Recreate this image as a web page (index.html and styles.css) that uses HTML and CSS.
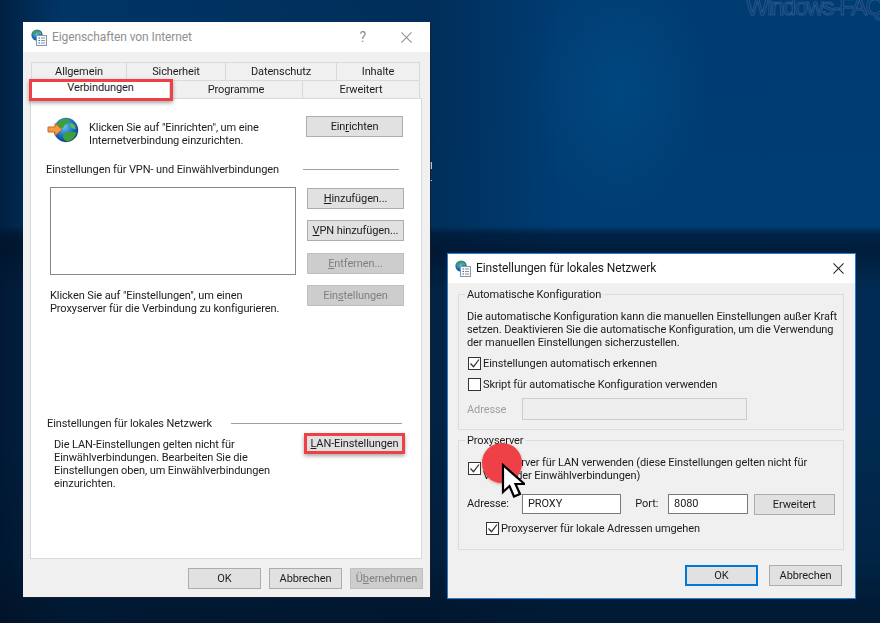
FILE: index.html
```html
<!DOCTYPE html>
<html lang="de">
<head>
<meta charset="utf-8">
<title>Eigenschaften von Internet</title>
<link rel="stylesheet" href="styles.css">
</head>
<body>
<svg class="defs" width="0" height="0" aria-hidden="true">
  <defs>
    <radialGradient id="sea" cx="0.42" cy="0.35" r="0.7">
      <stop offset="0" stop-color="#6cc4f5"/><stop offset="0.55" stop-color="#1b74c4"/><stop offset="1" stop-color="#0b2f7a"/>
    </radialGradient>
    <symbol id="globe" viewBox="0 0 32 32">
      <circle cx="16" cy="16" r="15" fill="url(#sea)"/>
      <path d="M9 4c4-2 9-2 12 0l-2 4-4 1-2 4-5 1-4-2c0-3 3-6 5-8zM14 20l8-2 7 1c-1 5-6 11-12 11-3-1-4-4-5-6z" fill="#3fa03a"/>
      <path d="M22 7l5 3 1 5-4-1-3-3z" fill="#67b845"/>
    </symbol>
    <symbol id="appicon" viewBox="0 0 16 17">
      <use href="#globe" x="0" y="0" width="12" height="12"/>
      <rect x="5.5" y="6.5" width="10" height="10" fill="#f7f9fb" stroke="#8a96a3"/>
      <path d="M7.5 9h1.5M7.5 11.500h1.500M7.500 14h1.500" stroke="#1f6fb5"/>
      <path d="M10 9h4M10 11.500h4M10 14h4" stroke="#8a96a3"/>
    </symbol>
    <symbol id="tick" viewBox="0 0 11 11">
      <path d="M1.500 5.500l3 3.200 5.500-7.200" fill="none" stroke="#333" stroke-width="1.200"/>
    </symbol>
  </defs>
</svg>
<main class="desktop">
  <div class="watermark">Windows-FAQ</div>
  <div class="stray"></div>

  <section class="win win-main">
    <header class="titlebar titlebar-inactive">
      <svg class="appicon"><use href="#appicon"/></svg>
      <span class="title">Eigenschaften von Internet</span>
      <span class="help">?</span>
      <svg class="close close-inactive" viewBox="0 0 12 12"><path d="M0.500 0.500l11 11M11.500 0.500l-11 11"/></svg>
    </header>
    <div class="win-body">
      <div class="tabrow tabrow-top">
        <div class="tab">Allgemein</div>
        <div class="tab">Sicherheit</div>
        <div class="tab">Datenschutz</div>
        <div class="tab">Inhalte</div>
      </div>
      <div class="tabrow tabrow-bottom">
        <div class="tab tab-selected">Verbindungen</div>
        <div class="tab">Programme</div>
        <div class="tab">Erweitert</div>
      </div>
      <div class="panel">
        <div class="intro">
          <svg class="bigicon" viewBox="0 0 32 26">
            <use href="#globe" x="6" y="0" width="26" height="26"/>
            <path d="M1 10h7V6.500l7 6-7 6V15H1z" fill="#f59a45" stroke="#c96a1e"/>
          </svg>
          <p class="text intro-text">Klicken Sie auf "Einrichten", um eine<br>Internetverbindung einzurichten.</p>
          <button class="btn btn-setup">Ein<u>r</u>ichten</button>
        </div>
        <div class="heading heading-vpn"><span>Einstellungen für VPN- und Einwählverbindungen</span><i class="rule rule-vpn"></i></div>
        <div class="vpn">
          <div class="vpn-left">
            <div class="listbox"></div>
            <p class="text vpn-text">Klicken Sie auf "Einstellungen", um einen<br>Proxyserver für die Verbindung zu konfigurieren.</p>
          </div>
          <div class="vpn-buttons">
            <button class="btn"><u>H</u>inzufügen...</button>
            <button class="btn"><u>V</u>PN hinzufügen...</button>
            <button class="btn btn-off"><u>E</u>ntfernen...</button>
            <button class="btn btn-off">Ein<u>s</u>tellungen</button>
          </div>
        </div>
        <div class="heading heading-lan"><span>Einstellungen für lokales Netzwerk</span><i class="rule rule-lan"></i></div>
        <div class="lan">
          <p class="text lan-text">Die LAN-Einstellungen gelten nicht für<br>Einwählverbindungen. Bearbeiten Sie die<br>Einstellungen oben, um Einwählverbindungen<br>einzurichten.</p>
          <button class="btn btn-lan"><u>L</u>AN-Einstellungen</button>
        </div>
      </div>
      <footer class="footer footer-main">
        <button class="btn btn-foot">OK</button>
        <button class="btn btn-foot">Abbrechen</button>
        <button class="btn btn-foot btn-off">Ü<u>b</u>ernehmen</button>
      </footer>
    </div>
  </section>

  <section class="win win-lan">
    <header class="titlebar titlebar-lan">
      <svg class="appicon"><use href="#appicon"/></svg>
      <span class="title title-active">Einstellungen für lokales Netzwerk</span>
      <svg class="close" viewBox="0 0 12 12"><path d="M0.500 0.500l11 11M11.500 0.500l-11 11"/></svg>
    </header>
    <div class="lan-body">
      <fieldset class="group group-auto">
        <legend>Automatische Konfiguration</legend>
        <p class="text">Die automatische Konfiguration kann die manuellen Einstellungen außer Kraft<br>setzen. Deaktivieren Sie die automatische Konfiguration, um die Verwendung<br>der manuellen Einstellungen sicherzustellen.</p>
        <label class="check check-first"><span class="box"><svg><use href="#tick"/></svg></span>Einstellungen automatisch erkennen</label>
        <label class="check check-second"><span class="box"></span>Skript für automatische Konfiguration verwenden</label>
        <div class="field field-off">
          <span class="field-label">Adresse</span>
          <span class="input input-off"></span>
        </div>
      </fieldset>
      <fieldset class="group group-proxy">
        <legend>Proxyserver</legend>
        <label class="check check-proxy"><span class="box"><svg><use href="#tick"/></svg></span><span>Proxyserver für LAN verwenden (diese Einstellungen gelten nicht für<br>VPN- oder Einwählverbindungen)</span></label>
        <div class="field field-proxy">
          <span class="field-label">Adresse:</span>
          <span class="input input-addr">PROXY</span>
          <span class="port-label">Port:</span>
          <span class="input input-port">8080</span>
          <button class="btn btn-adv">Erweitert</button>
        </div>
        <label class="check check-bypass"><span class="box"><svg><use href="#tick"/></svg></span>Proxyserver für lokale Adressen umgehen</label>
      </fieldset>
      <footer class="footer footer-lan">
        <button class="btn btn-foot btn-default">OK</button>
        <button class="btn btn-foot">Abbrechen</button>
      </footer>
    </div>
  </section>

  <div class="dot"></div>
  <svg class="cursor" viewBox="0 0 24 36"><path d="M2 2v27l6.500-6 4.500 10.500 6-2.500-4.500-10h9z" fill="#fff" stroke="#000" stroke-width="2.200" stroke-linejoin="miter"/></svg>
</main>
</body>
</html>
```
FILE: styles.css
```css
* { box-sizing: border-box; }
html, body { margin: 0; padding: 0; }
body { font: 11px/13px Roboto, "Liberation Sans", sans-serif; letter-spacing: -0.1px; color: #1c1c1c; }
.defs { position: absolute; }
p { margin: 0; white-space: nowrap; }
u { text-underline-offset: 1px; }

.desktop {
  position: relative;
  width: 880px;
  height: 623px;
  overflow: hidden;
  background:
    linear-gradient(90deg, rgba(2, 14, 34, .6) 0, rgba(2, 14, 34, .15) 60px, rgba(2, 14, 34, .3) 430px, rgba(2, 14, 34, 0) 560px),
    radial-gradient(ellipse 90px 130px at 620px 90px, rgba(0, 82, 140, .5), rgba(0, 82, 140, 0)),
    linear-gradient(180deg, #003c72 0, #003d73 226px, #002348 234px, #001d3c 250px, #012b52 290px, #012b52 420px, #012445 560px, #011c38 600px, #011a34 623px);
}

.watermark {
  position: absolute;
  left: 746px;
  top: -8px;
  font: 24px/30px "Liberation Sans", sans-serif;
  letter-spacing: -1.500px;
  white-space: nowrap;
  color: #0a3163;
  -webkit-text-stroke: 1px #23598f;
}
.stray { position: absolute; left: 430px; top: 162px; width: 2px; height: 7px; background: #b9c6d1; }
.stray::after { content: ""; position: absolute; left: 0; top: 18px; width: 2px; height: 1px; background: #b9c6d1; }

.win { position: absolute; display: flex; flex-direction: column; background: #f0f0f0; filter: blur(.3px); }
.win-main { left: 23px; top: 22px; width: 407px; height: 575px; box-shadow: 1px 1px 0 rgba(30, 30, 30, .75); }
.win-lan { left: 447px; top: 253px; width: 409px; height: 346px; border: 1px solid #1a80cf; }

.titlebar { display: flex; align-items: center; background: #fff; flex: none; }
.titlebar-inactive { height: 30px; padding-left: 8px; color: #8f8f8f; }
.titlebar-lan { height: 29px; padding-left: 7px; }
.appicon { width: 16px; height: 17px; flex: none; }
.title { font-size: 12px; margin-left: 5px; flex: 1; }
.title-active { margin-left: 5px; color: #1a1a1a; }
.help { font-size: 14px; color: #8f8f8f; margin-right: 35px; }
.close { width: 11px; height: 11px; margin-right: 11px; fill: none; stroke: #222; stroke-width: 1.100; }
.close-inactive { stroke: #8f8f8f; margin-right: 18px; }

.win-body { flex: 1; padding: 10px 8px 0 7px; display: flex; flex-direction: column; }

.tabrow { display: grid; height: 18px; margin-left: 1px; margin-right: 2px; text-align: center; }
.tabrow-top { grid-template-columns: 96px 99px 111px 83px; }
.tabrow-bottom { grid-template-columns: 139px 133px 117px; }
.tab { background: #f0f0f0; border: 1px solid #d9d9d9; border-left-width: 0; border-bottom-width: 0; line-height: 17px; }
.tab:first-child { border-left-width: 1px; }
.tab-selected { position: relative; background: #fff; line-height: 13px; z-index: 1; }
.tab-selected::after {
  content: "";
  position: absolute;
  left: -3px;
  right: -4px;
  top: -2px;
  bottom: -3px;
  border: 3px solid #ee4046;
  box-shadow: 0 2px 4px rgba(0, 0, 0, .35);
}

.panel { height: 461px; background: #fff; border: 1px solid #d9d9d9; display: flex; flex-direction: column; }

.btn {
  display: flex;
  align-items: center;
  justify-content: center;
  padding: 0;
  height: 21px;
  font: inherit;
  letter-spacing: inherit;
  color: #1c1c1c;
  background: #e1e1e1;
  border: 1px solid #adadad;
  white-space: nowrap;
}
.btn-off { background: #cdcdcd; border-color: #bfbfbf; color: #808080; }

.intro { display: flex; margin-top: 17px; padding-left: 16px; height: 26px; }
.bigicon { width: 32px; height: 26px; flex: none; margin-top: 1px; }
.intro-text { margin: 5px 0 0 10px; width: 217px; }
.btn-setup { width: 97px; }

.heading { display: flex; align-items: center; height: 13px; }
.heading span { flex: none; }
.rule { display: block; height: 1px; background: #a0a0a0; }
.heading-vpn { margin-top: 21px; padding-left: 15px; }
.rule-vpn { width: 96px; margin-left: auto; margin-right: 22px; }
.heading-lan { margin-top: 0; padding-left: 16px; }
.rule-lan { width: 171px; margin-left: auto; margin-right: 19px; }

.vpn { display: flex; margin-top: 11px; padding-left: 19px; height: 230px; }
.vpn-left { width: 257px; }
.listbox { width: 246px; height: 88px; background: #fff; border: 1px solid #828790; }
.vpn-text { margin-top: 14px; }
.vpn-buttons { width: 97px; display: flex; flex-direction: column; gap: 11.300px; margin-top: 1px; }

.lan { display: flex; justify-content: space-between; margin-top: 8px; padding-left: 23px; padding-right: 16px; }
.btn-lan { width: 101px; height: 21px; margin-top: -5px; border: 3px solid #ee4046; box-shadow: 0 2px 4px rgba(0, 0, 0, .35); background: #e1e1e1; }

.footer { display: flex; justify-content: flex-end; gap: 8px; }
.footer-main { margin-top: 9px; padding-right: 0; margin-right: -1px; }
.btn-foot { width: 73px; }

.lan-body { flex: 1; padding: 5px 11px 0 10px; display: flex; flex-direction: column; }
.group { margin: 0; padding: 0 8px; border: 1px solid #dcdcdc; min-width: 0; position: relative; }
.group legend { padding: 0 2px; margin-left: -2px; line-height: 13px; }
.group-auto { height: 142px; }
.group-auto .text { margin-top: 9px; }
.group-proxy { height: 116px; margin-top: 4px; }

.check { display: flex; align-items: flex-start; line-height: 13px; white-space: nowrap; }
.box { width: 13px; height: 13px; margin: 0 2px 0 1px; border: 1px solid #333; background: #fff; flex: none; display: flex; align-items: center; justify-content: center; }
.box svg { width: 11px; height: 11px; }
.check-first { margin-top: 8px; }
.check-second { margin-top: 8px; }
.check-proxy { margin-top: 9px; }
.check-proxy .box { margin-top: 6px; }
.check-bypass { margin-top: 7px; margin-left: 18px; }

.field { display: flex; align-items: center; }
.field-off { margin-top: 7px; }
.field-label { width: 55px; flex: none; }
.field-off .field-label { color: #a0a0a0; }
.input { display: flex; align-items: center; height: 20px; padding-left: 5px; background: #fff; border: 1px solid #7a7a7a; }
.input-off { width: 225px; height: 22px; background: #eeeeee; border-color: #cccccc; }
.field-proxy { margin-top: 10px; }
.input-addr { width: 100px; }
.port-label { width: 33px; margin-left: 14px; }
.input-port { width: 80px; }
.btn-adv { width: 82px; margin-left: 6px; margin-top: 2px; }

.footer-lan { margin-top: 15px; margin-right: 2px; gap: 11px; }
.btn-default { border: 2px solid #0078d7; }

.dot { position: absolute; left: 482px; top: 443px; width: 40px; height: 40px; border-radius: 50%; background: #ee4046; box-shadow: 0 1px 3px rgba(120, 0, 0, .35); }
.cursor { position: absolute; left: 501px; top: 463px; width: 24px; height: 36px; }
```
